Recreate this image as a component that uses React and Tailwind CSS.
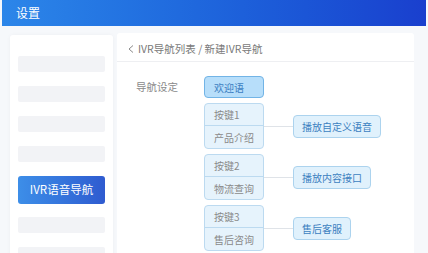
import React from 'react';

const font = { fontFamily: '"Noto Sans CJK SC", "Noto Sans", sans-serif' };

const keys = [
  { key: '按键1', name: '产品介绍', action: '播放自定义语音' },
  { key: '按键2', name: '物流查询', action: '播放内容接口' },
  { key: '按键3', name: '售后咨询', action: '售后客服' },
];

const App = () => {
  return (
    <div className="w-[428px] h-[253px] overflow-hidden bg-[#f6f8fb]" style={font}>
      {/* Header */}
      <div className="mx-[2px] h-[26px] flex items-center pl-[14px] bg-gradient-to-r from-[#2c86e9] to-[#1a3fce]">
        <span className="text-white text-[12px] leading-none">设置</span>
      </div>

      <div className="flex items-start pl-[10px] pt-[7px] gap-[4px]">
        {/* Sidebar */}
        <div className="w-[103px] h-[230px] mt-[2px] bg-white rounded-[3px] shadow-[0_0_4px_rgba(0,0,0,0.04)] pt-[21px] px-[8px] flex flex-col gap-[14px]">
          <div className="h-[16px] rounded-[2px] bg-[#f2f3f6]" />
          <div className="h-[16px] rounded-[2px] bg-[#f2f3f6]" />
          <div className="h-[16px] rounded-[2px] bg-[#f2f3f6]" />
          <div className="h-[16px] rounded-[2px] bg-[#f2f3f6]" />
          <div className="h-[28px] -mb-[1px] rounded-[3px] bg-gradient-to-r from-[#3d8ee8] to-[#2f5bd0] flex items-center justify-center">
            <span className="text-white text-[11.5px] leading-none">IVR语音导航</span>
          </div>
          <div className="h-[16px] rounded-[2px] bg-[#f2f3f6]" />
          <div className="h-[16px] rounded-[2px] bg-[#f2f3f6]" />
        </div>

        {/* Main card */}
        <div className="w-[297px] h-[230px] bg-white rounded-[3px]">
          <div className="h-[29px] flex items-center pl-[11px] pt-[3px] border-b border-[#eeeff2] text-[10.5px] text-[#7a7a7a]">
            <svg width="6" height="8" viewBox="0 0 6 8" className="mr-[4px]">
              <polyline points="5,0.5 1,4 5,7.5" fill="none" stroke="#8a8a8a" strokeWidth="1" />
            </svg>
            <span>IVR导航列表 / 新建IVR导航</span>
          </div>

          <div className="pt-[14px] flex flex-col gap-[5px]">
            <div className="flex items-center">
              <div className="w-[87px] pl-[19px] text-[10.5px] text-[#8a8a8a]">导航设定</div>
              <div className="w-[60px] h-[22px] rounded-[4px] bg-[#b7defa] border border-[#72b4e6] flex items-center pl-[9px] text-[10px] text-[#3d7fc2]">
                欢迎语
              </div>
            </div>

            {keys.map((k) => (
              <div key={k.key} className="flex items-center">
                <div className="w-[87px]" />
                <div className="w-[60px] h-[46px] rounded-[4px] bg-[#e6f3fc] border border-[#bcdaf0] flex flex-col text-[10px] text-[#8a8a8a]">
                  <div className="h-[22px] flex items-center pl-[9px] border-b border-[#bcdaf0]">{k.key}</div>
                  <div className="flex-1 flex items-center pl-[9px]">{k.name}</div>
                </div>
                <div className="w-[29px] h-px bg-[#dfe3e8]" />
                <div className="h-[23px] px-[8px] rounded-[4px] bg-[#e0f1fc] border border-[#acd3ee] flex items-center text-[10px] text-[#3c7fc0]">
                  {k.action}
                </div>
              </div>
            ))}
          </div>
        </div>
      </div>
    </div>
  );
};

export default App;
